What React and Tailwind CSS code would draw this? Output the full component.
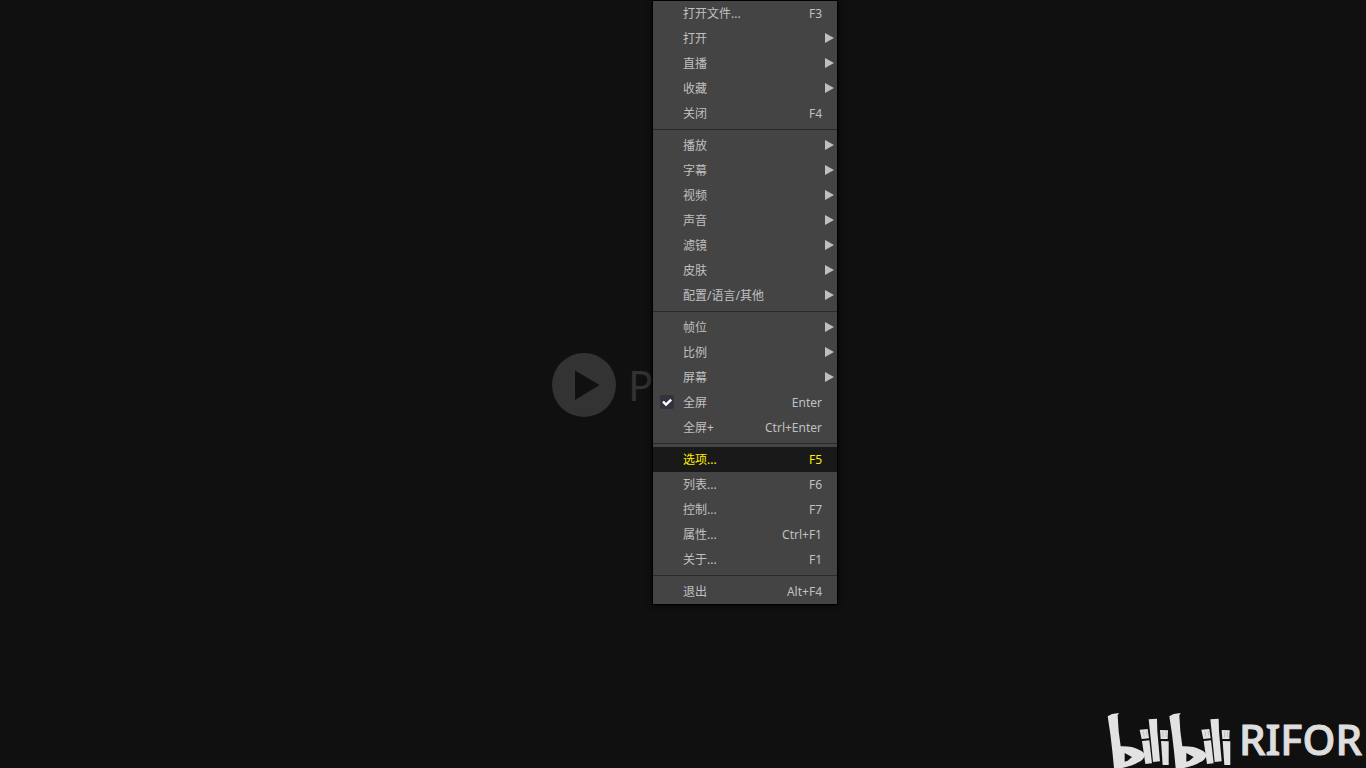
import React from "react";

const groups = [
  [
    { label: "打开文件...", key: "F3" },
    { label: "打开", sub: true },
    { label: "直播", sub: true },
    { label: "收藏", sub: true },
    { label: "关闭", key: "F4" },
  ],
  [
    { label: "播放", sub: true },
    { label: "字幕", sub: true },
    { label: "视频", sub: true },
    { label: "声音", sub: true },
    { label: "滤镜", sub: true },
    { label: "皮肤", sub: true },
    { label: "配置/语言/其他", sub: true },
  ],
  [
    { label: "帧位", sub: true },
    { label: "比例", sub: true },
    { label: "屏幕", sub: true },
    { label: "全屏", key: "Enter", checked: true },
    { label: "全屏+", key: "Ctrl+Enter" },
  ],
  [
    { label: "选项...", key: "F5", active: true },
    { label: "列表...", key: "F6" },
    { label: "控制...", key: "F7" },
    { label: "属性...", key: "Ctrl+F1" },
    { label: "关于...", key: "F1" },
  ],
  [{ label: "退出", key: "Alt+F4" }],
];

function MenuItem({ item }) {
  const tone = item.active ? "bg-[#191919] text-[#fff000]" : "text-[#c0c0c0]";
  return (
    <button
      type="button"
      role={item.checked ? "menuitemcheckbox" : "menuitem"}
      aria-checked={item.checked}
      aria-haspopup={item.sub ? "menu" : undefined}
      className={"flex h-[25px] w-full items-center text-left text-xs " + tone}
    >
      <span className="flex w-[30px] shrink-0 pb-px pl-[7px]">
        {item.checked && (
          <svg viewBox="0 0 14 14" className="size-[14px]" aria-hidden="true">
            <rect width="14" height="14" rx="2" fill="#33323e" />
            <path d="M3 6.7 6 9.6 11.2 4.6" fill="none" stroke="#fff" strokeWidth="2.4" />
          </svg>
        )}
      </span>
      <span className="flex-1 whitespace-nowrap">{item.label}</span>
      {item.key && <span className="pr-[15px]">{item.key}</span>}
      {item.sub && (
        <svg viewBox="0 0 9 10" className="mr-[3px] mb-px h-[10px] w-[9px]" aria-hidden="true">
          <path d="M0 0 9 5 0 10Z" fill="#bfbfbf" />
        </svg>
      )}
    </button>
  );
}

function BilibiliLogo() {
  return (
    <svg viewBox="36 39 372 171" className="h-[57px] w-[124px] shrink-0" role="img" aria-label="bilibili">
      <defs>
        <g id="bili">
          <g fill="#e2e2e2">
            <path
              fillRule="evenodd"
              d="M38 55 51 48 72 45 68 52 71 100 77 145Q112 144 132 155 151 164 149 173 147 184 130 193 112 204 82 210H57L52 160 46 108ZM89 165V191L98 188 111 177Z"
            />
            <path d="M134 95 158 93 162 121 140 123Z" />
            <path d="M141 129 163 127 171 196 151 198Z" />
            <path d="M161 64 186 62 187 100 195 190 174 192 168 130Z" />
            <path d="M195 96 219 97 218 123 197 123Z" />
            <path d="M198 129 221 130 221 201 203 201Z" />
          </g>
          <path
            d="M145 100 148 116M154 98 156 112M204 101V119M213 101V117"
            fill="none"
            stroke="#bdbdbd"
            strokeWidth="3"
          />
        </g>
      </defs>
      <use href="#bili" />
      <use href="#bili" x="185" />
    </svg>
  );
}

export default function App() {
  return (
    <div className="relative flex min-h-screen items-center justify-center overflow-hidden bg-[#101010] font-['Noto_Sans','Noto_Sans_CJK_SC',sans-serif]">
      <main className="flex w-[262px] items-center gap-3 pt-[2px]">
        <svg viewBox="0 0 64 64" className="size-16" aria-hidden="true">
          <circle cx="32" cy="32" r="32" fill="#333" />
          <path d="M23 17.5 47.5 32 23 47Z" fill="#101010" />
        </svg>
        <span className="text-[42px] leading-[62px] text-[#333]">P</span>
      </main>

      <nav
        role="menu"
        aria-label="菜单"
        className="absolute top-0 left-[652px] w-[186px] border border-black bg-[#444] shadow-[0_0_6px_rgba(0,0,0,0.8)]"
      >
        {groups.map((items, i) => (
          <div key={i} role="group">
            {i > 0 && <div role="separator" className="my-[3px] h-px bg-[#29292c]" />}
            {items.map((item) => (
              <MenuItem key={item.label} item={item} />
            ))}
          </div>
        ))}
      </nav>

      <div className="absolute right-1 bottom-0 flex items-end gap-2">
        <BilibiliLogo />
        <span className="text-[42px] leading-[58px] font-medium text-[#dedede] [-webkit-text-stroke:1px_#dedede]">
          RIFOR
        </span>
      </div>
    </div>
  );
}
